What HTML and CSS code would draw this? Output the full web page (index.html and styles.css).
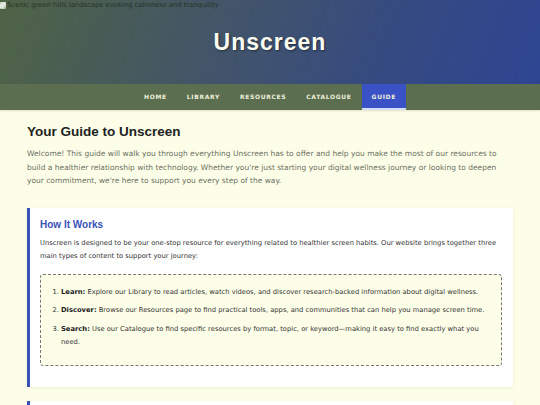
FILE: index.html
```html
<!DOCTYPE html>
<html lang="en">
<head>
<meta charset="utf-8">
<title>Guide | Unscreen</title>
<link rel="stylesheet" href="styles.css">
</head>
<body>
<header class="site-header">
  <span class="hero-img" role="img"><span class="broken-icon"></span>Scenic green hills landscape evoking calmness and tranquility</span>
  <h1 class="site-title">Unscreen</h1>
</header>
<nav class="site-nav">
  <a href="#" class="nav-link">Home</a>
  <a href="#" class="nav-link">Library</a>
  <a href="#" class="nav-link">Resources</a>
  <a href="#" class="nav-link">Catalogue</a>
  <a href="#" class="nav-link active">Guide</a>
</nav>
<main class="content">
  <h2 class="page-title">Your Guide to Unscreen</h2>
  <p class="intro">Welcome! This guide will walk you through everything Unscreen has to offer and help you make the most of our resources to build a healthier relationship with technology. Whether you're just starting your digital wellness journey or looking to deepen your commitment, we're here to support you every step of the way.</p>

  <section class="card">
    <h3 class="card-title">How It Works</h3>
    <p class="card-text">Unscreen is designed to be your one-stop resource for everything related to healthier screen habits. Our website brings together three main types of content to support your journey:</p>
    <div class="steps">
      <ol>
        <li><strong>Learn:</strong> Explore our Library to read articles, watch videos, and discover research-backed information about digital wellness.</li>
        <li><strong>Discover:</strong> Browse our Resources page to find practical tools, apps, and communities that can help you manage screen time.</li>
        <li><strong>Search:</strong> Use our Catalogue to find specific resources by format, topic, or keyword—making it easy to find exactly what you need.</li>
      </ol>
    </div>
  </section>

  <section class="card">
    <h3 class="card-title">Getting Started</h3>
  </section>
</main>
</body>
</html>
```

FILE: styles.css
```css
* { box-sizing: border-box; }

html, body {
  margin: 0;
  padding: 0;
}

body {
  background: #fdfee8;
  font-family: "DejaVu Sans", Verdana, sans-serif;
  font-size: 6.75px;
  color: #333;
}

/* banner */
.site-header {
  position: relative;
  height: 84px;
  background: linear-gradient(110deg, #4f6445 0%, #435568 40%, #364b80 70%, #2e4592 100%);
  display: flex;
  align-items: center;
  justify-content: center;
}

.hero-img {
  position: absolute;
  top: 1px;
  left: 0;
  display: flex;
  align-items: center;
  font-family: "DejaVu Sans", Verdana, sans-serif;
  font-size: 6.8px;
  line-height: 9px;
  color: #263226;
  white-space: nowrap;
}

.broken-icon {
  display: inline-block;
  width: 6px;
  height: 7px;
  margin-right: 1px;
  background: linear-gradient(135deg, #c8d2c4 0%, #e8eee6 50%, #9fae9a 100%);
  border-radius: 1px;
}

.site-title {
  margin: 0;
  font-family: "Liberation Sans", Arial, sans-serif;
  font-size: 23px;
  font-weight: 700;
  letter-spacing: 1px;
  color: #fbfbf0;
  text-shadow: 1px 1px 2px rgba(0, 0, 0, 0.45);
}

/* navigation */
.site-nav {
  height: 26px;
  background: #5b6e50;
  display: flex;
  justify-content: center;
  box-shadow: 0 1px 2px rgba(0, 0, 0, 0.12);
}

.nav-link {
  display: flex;
  align-items: center;
  padding: 0 10px;
  font-family: "DejaVu Sans", Verdana, sans-serif;
  font-size: 6px;
  font-weight: 700;
  letter-spacing: 0.65px;
  text-transform: uppercase;
  text-decoration: none;
  color: #f0f0dc;
  border-bottom: 2px solid transparent;
}

.nav-link.active {
  background: #3a52c6;
  border-bottom-color: #d6e0f4;
}

/* main content */
.content {
  padding: 14px 27px 0;
}

.page-title {
  margin: 0 0 7px;
  font-family: "Liberation Sans", Arial, sans-serif;
  font-size: 13.5px;
  line-height: 16px;
  font-weight: 700;
  color: #222;
}

.intro {
  margin: 0 0 20px;
  font-size: 7.5px;
  line-height: 13.5px;
  color: #6b7062;
}

.card {
  background: #fff;
  border-left: 3px solid #3a52b8;
  padding: 11px 11px 11px 10px;
  margin-bottom: 14px;
  box-shadow: 0 1px 3px rgba(120, 120, 80, 0.12);
}

.card-title {
  margin: 0 0 6px;
  font-family: "Liberation Sans", Arial, sans-serif;
  font-size: 10px;
  line-height: 12px;
  font-weight: 700;
  color: #3a52b8;
}

.card-text {
  margin: 0 0 10px;
  line-height: 13.5px;
  color: #333;
}

.steps {
  background: #fdfee8;
  border: 1px dashed #777;
  border-radius: 3px;
  padding: 11px 10px 11px 10px;
  margin-bottom: 10px;
}

.steps ol {
  margin: 0;
  padding-left: 10px;
}

.steps li {
  line-height: 13px;
  margin-bottom: 5.5px;
  color: #333;
}

.steps strong {
  color: #222;
}
```
